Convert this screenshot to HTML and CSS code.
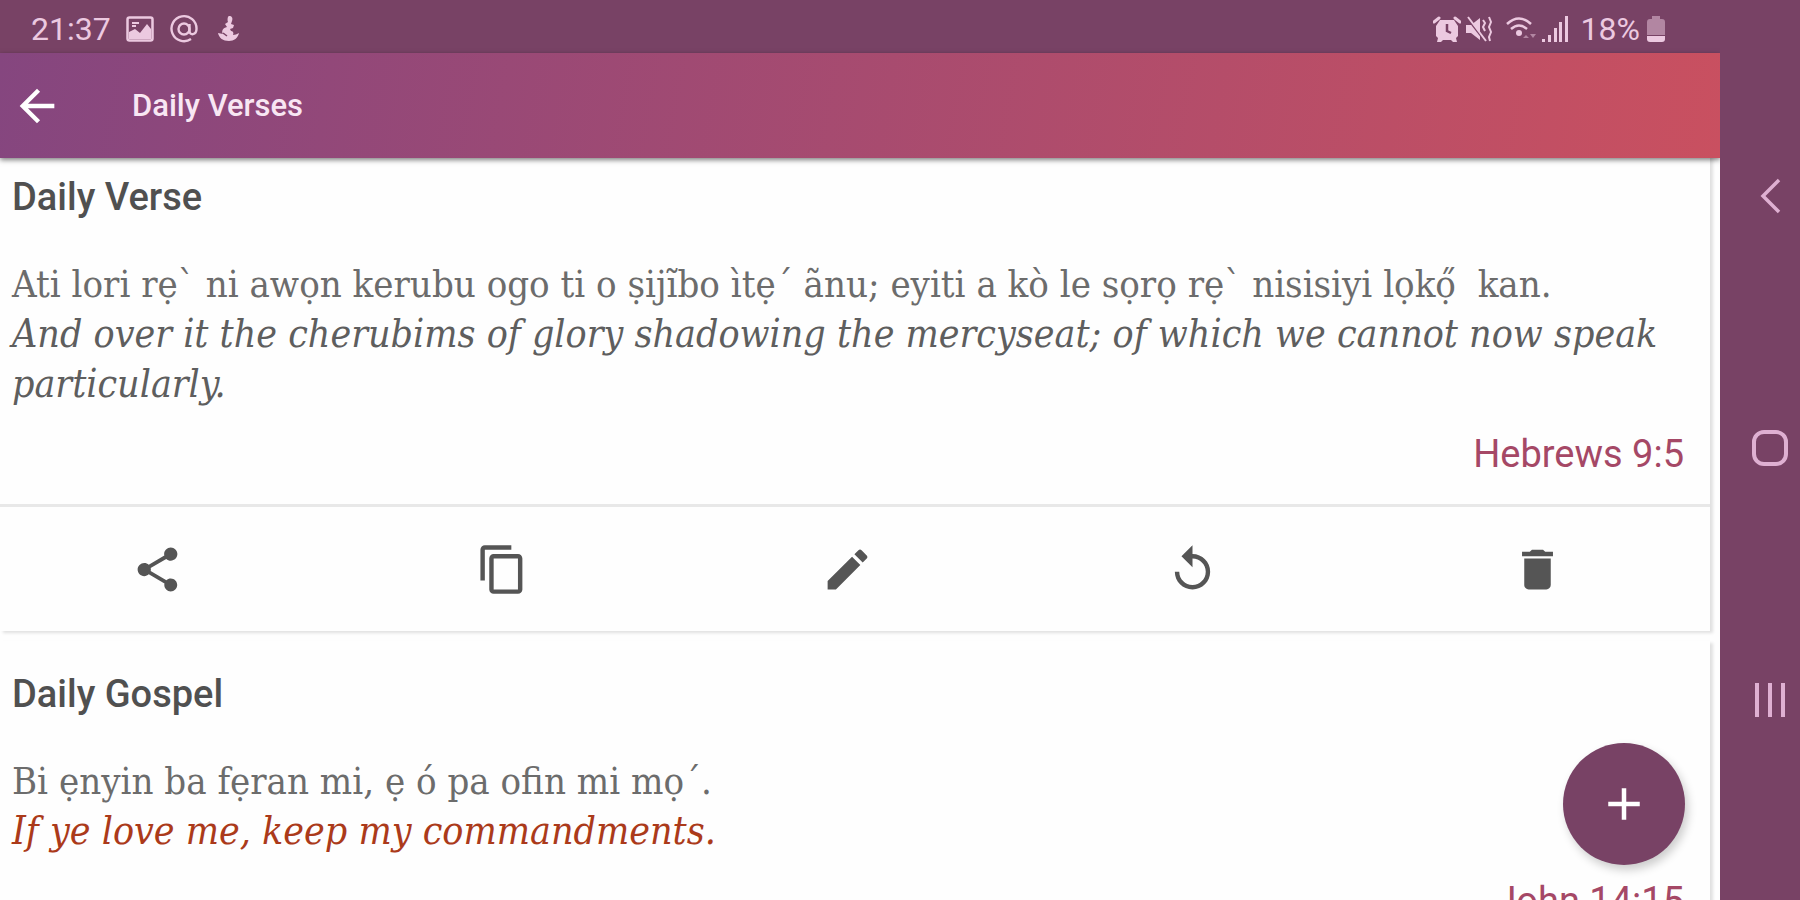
FILE: index.html
```html
<!DOCTYPE html>
<html lang="yo">
<head>
<meta charset="utf-8">
<meta name="viewport" content="width=device-width, initial-scale=1">
<title>Daily Verses</title>
<link rel="stylesheet" href="styles.css">
</head>
<body>
<div class="device">
  <div class="screen">
    <div class="status">
      <div class="status-group">
        <span class="status-text">21:37</span>
        <svg class="status-icon" viewBox="0 0 28 28"><rect x="1.500" y="2.500" width="25" height="23" rx="2" fill="none" stroke="currentColor" stroke-width="2.500"/><path d="M3 24v-7l6-3 5 4 7-9 4 5v10z" fill="currentColor"/><path d="M6 7h7v2H6zM6 10h4v2H6z" fill="currentColor"/></svg>
        <svg class="status-icon at" viewBox="0 0 30 30"><g fill="none" stroke="currentColor" stroke-width="2.400"><circle cx="15" cy="15" r="5.500"/><path d="M20.500 10v7c0 5 7 4 7-2A12.500 12.500 0 1 0 22 25"/></g></svg>
        <svg class="status-icon" viewBox="0 0 28 28"><path d="M15 1c3 0 4 2 3 5l-1 3 3 1-1 3-3 1 1 2c2 0 3 2 2 4 2 0 4-1 6-2-1 5-5 8-10 8-6 0-10-3-11-8l5 1c-2-3 0-6 4-7l-2-3 3-2c-1-3 0-6 1-6z" fill="currentColor"/><path d="M9 18l4 3" stroke="#784265" stroke-width="1.500"/></svg>
      </div>
      <div class="status-group tight">
        <svg class="status-icon" viewBox="0 0 28 28"><path d="M6 3L1 7M22 3l5 4" stroke="currentColor" stroke-width="3" stroke-linecap="round"/><path d="M7 5h14l4 6v10l-2 2 1 4h-4l-2-2h-8l-2 2H4l1-4-2-2V11z" fill="currentColor"/><path d="M14 9v7l4 2" fill="none" stroke="#784265" stroke-width="2.500"/></svg>
        <svg class="status-icon" viewBox="0 0 28 28"><path d="M1 10h5l9-7v22l-9-7H1z" fill="currentColor"/><path d="M2 3l17 22" stroke="#784265" stroke-width="2"/><path d="M3 2l18 24M18 5l2 3-2 4 2 4M24 2l2 5-2 5 2 5-2 5 1 4" fill="none" stroke="currentColor" stroke-width="2"/></svg>
        <svg class="status-icon wifi" viewBox="0 0 32 28"><g fill="none" stroke="currentColor" stroke-width="2.500"><path d="M2 9Q14-2 26 9M6 14q8-7 16 0"/></g><circle cx="14" cy="18" r="3" fill="currentColor"/><path d="M18 23l3-3 3 3zM25 19h6l-3 4z" fill="currentColor" opacity=".5"/></svg>
        <svg class="status-icon" viewBox="0 0 28 28"><path d="M1 24h3v3H1zM7 20h3v7H7zM13 13h3v14h-3zM18 7h3v20h-3zM24 1h3v26h-3z" fill="currentColor"/></svg>
        <span class="status-text battery-text">18%</span>
        <svg class="status-icon battery" viewBox="0 0 20 28"><path d="M6 1h8v3h2q3 0 3 3v13H1V7q0-3 3-3h2z" fill="currentColor" opacity=".5"/><path d="M1 21h18v3q0 3-3 3H4q-3 0-3-3z" fill="currentColor"/></svg>
      </div>
    </div>

    <header class="appbar">
      <button class="icon-button back" aria-label="Back"><svg viewBox="0 0 24 24"><path d="M20 11H7.830l5.590-5.590L12 4l-8 8 8 8 1.410-1.410L7.830 13H20z" fill="currentColor"/></svg></button>
      <h1 class="appbar-title">Daily Verses</h1>
    </header>

    <main class="cards">
      <article class="card">
        <div class="card-body">
          <h2 class="card-title">Daily Verse</h2>
          <p class="verse">Ati lori rẹˋ ni awọn kerubu ogo ti o ṣijĩbo ìtẹˊ ãnu; eyiti a kò le sọrọ rẹˋ nisisiyi lọkọ̋&nbsp; kan.</p>
          <p class="verse translation" lang="en">And over it the cherubims of glory shadowing the mercyseat; of which we cannot now speak particularly.</p>
          <p class="reference">Hebrews 9:5</p>
        </div>
        <div class="actions">
          <button class="icon-button action" aria-label="Share"><svg viewBox="0 0 24 24"><path d="M18 16.080c-.76 0-1.440.3-1.960.77L8.910 12.700c.05-.23.09-.46.09-.7s-.04-.47-.09-.7l7.050-4.110c.54.5 1.250.81 2.040.81 1.660 0 3-1.340 3-3s-1.340-3-3-3-3 1.340-3 3c0 .24.04.47.09.7L8.040 9.810C7.500 9.310 6.790 9 6 9c-1.660 0-3 1.340-3 3s1.340 3 3 3c.79 0 1.500-.31 2.040-.81l7.120 4.160c-.05.21-.08.43-.08.65 0 1.610 1.310 2.920 2.920 2.920s2.920-1.310 2.920-2.920-1.310-2.920-2.920-2.920z" fill="currentColor"/></svg></button>
          <button class="icon-button action" aria-label="Copy"><svg viewBox="0 0 24 24"><path d="M16 1H4c-1.100 0-2 .9-2 2v14h2V3h12V1zm3 4H8c-1.100 0-2 .9-2 2v14c0 1.100.9 2 2 2h11c1.100 0 2-.9 2-2V7c0-1.100-.9-2-2-2zm0 16H8V7h11v14z" fill="currentColor"/></svg></button>
          <button class="icon-button action" aria-label="Edit"><svg viewBox="0 0 24 24"><path d="M3 17.250V21h3.750L17.810 9.940l-3.750-3.750L3 17.250zM20.710 7.040c.39-.39.39-1.020 0-1.410l-2.340-2.340c-.39-.39-1.020-.39-1.410 0l-1.830 1.830 3.750 3.750 1.830-1.830z" fill="currentColor"/></svg></button>
          <button class="icon-button action" aria-label="Replay"><svg viewBox="0 0 24 24"><path d="M12 5V1L7 6l5 5V7c3.310 0 6 2.690 6 6s-2.690 6-6 6-6-2.690-6-6H4c0 4.420 3.580 8 8 8s8-3.580 8-8-3.580-8-8-8z" fill="currentColor"/></svg></button>
          <button class="icon-button action" aria-label="Delete"><svg viewBox="0 0 24 24"><path d="M6 19c0 1.100.9 2 2 2h8c1.100 0 2-.9 2-2V7H6v12zM19 4h-3.500l-1-1h-5l-1 1H5v2h14V4z" fill="currentColor"/></svg></button>
        </div>
      </article>

      <article class="card">
        <div class="card-body">
          <h2 class="card-title">Daily Gospel</h2>
          <p class="verse">Bi ẹnyin ba fẹran mi, ẹ ó pa ofin mi mọˊ.</p>
          <p class="verse translation gospel" lang="en">If ye love me, keep my commandments.</p>
          <p class="reference">John 14:15</p>
        </div>
      </article>
    </main>

    <button class="fab" aria-label="Add"><svg viewBox="0 0 24 24"><path d="M19 13h-6v6h-2v-6H5v-2h6V5h2v6h6z" fill="currentColor"/></svg></button>
  </div>

  <nav class="system-nav" aria-label="System">
    <button class="icon-button nav-button" aria-label="Back"><svg viewBox="0 0 40 40"><path d="M29 4L13 20l16 16" fill="none" stroke="currentColor" stroke-width="3.500"/></svg></button>
    <button class="icon-button nav-button" aria-label="Home"><svg viewBox="0 0 40 40"><rect x="4" y="4" width="32" height="32" rx="10" fill="none" stroke="currentColor" stroke-width="4"/></svg></button>
    <button class="icon-button nav-button" aria-label="Recent apps"><svg viewBox="0 0 40 40"><path d="M7 3v34M20 3v34M33 3v34" stroke="currentColor" stroke-width="4"/></svg></button>
  </nav>
</div>
</body>
</html>
```

FILE: styles.css
```css
* { box-sizing: border-box; }

body {
  margin: 0;
  font-family: Roboto, "Liberation Sans", sans-serif;
  color: #505050;
  background: #784265;
}

h1, h2, p { margin: 0; font-weight: 400; }

svg { display: block; width: 100%; height: 100%; }

.device {
  display: flex;
  height: 100vh;
  overflow: hidden;
}

.screen {
  position: relative;
  flex: 1;
  min-width: 0;
  display: flex;
  flex-direction: column;
  background: #fefefe;
  overflow: hidden;
}

.status {
  flex: none;
  display: flex;
  justify-content: space-between;
  align-items: center;
  padding: 4px 54px 0 31px;
  height: 53px;
  background: #784265;
  color: #ecc9e0;
}

.status-group { display: flex; align-items: center; gap: 15px; }
.status-group.tight { gap: 4px; }
.status-text { font-size: 32px; line-height: 40px; }
.battery-text { margin: 0 2px 0 8px; font-size: 32px; }
.status-icon { flex: none; width: 28px; height: 28px; }
.status-icon.at { width: 30px; height: 30px; }
.status-icon.wifi { width: 32px; margin-left: 8px; }
.status-icon.battery { width: 20px; }

.appbar {
  flex: none;
  z-index: 1;
  display: flex;
  align-items: center;
  gap: 86px;
  height: 105px;
  padding-left: 10px;
  color: #fff;
  background: linear-gradient(100deg, #85467f, #c95060);
  box-shadow: 0 2px 5px rgba(0, 0, 0, .5);
}

.appbar-title { font-size: 31px; line-height: 40px; font-weight: 500; color: #f8e6f3; }

.icon-button {
  display: flex;
  align-items: center;
  justify-content: center;
  border: 0;
  padding: 0;
  background: none;
  color: inherit;
}

.back { width: 36px; height: 52px; }
.back svg { flex: none; width: 52px; height: 52px; margin-left: 18px; }

.cards {
  display: flex;
  flex-direction: column;
  gap: 10px;
  margin-top: -14px;
  padding-right: 10px;
}

.card {
  background: #fefefe;
  box-shadow: 3px 2px 3px rgba(0, 0, 0, .12);
}

.card-body { padding: 30px 26px 27px 12px; }
.card-title { margin-bottom: 39px; font-size: 38px; line-height: 46px; font-weight: 500; }

.verse {
  font-family: "Roboto Slab", "DejaVu Serif Condensed", "DejaVu Serif", serif;
  font-size: 38px;
  line-height: 50px;
  color: #6c6c6c;
}

.translation { font-size: 39px; font-style: italic; color: #5e5e5e; }
.gospel { color: #ab3a1a; }

.reference {
  margin-top: 22px;
  font-size: 38px;
  line-height: 46px;
  text-align: right;
  color: #a54866;
}

.actions {
  display: flex;
  margin-left: -15px;
  border-top: 3px solid #e8e8e8;
  padding: 35px 0;
}

.action { flex: 1; height: 54px; color: #555; }
.action svg { width: 53px; height: 53px; }

.fab {
  position: absolute;
  right: 35px;
  bottom: 35px;
  display: flex;
  align-items: center;
  justify-content: center;
  width: 122px;
  height: 122px;
  border: 0;
  border-radius: 50%;
  color: #fff;
  background: #784265;
  box-shadow: 3px 5px 10px rgba(0, 0, 0, .2);
}

.fab svg { width: 54px; height: 54px; }

.system-nav {
  flex: none;
  display: flex;
  flex-direction: column;
  justify-content: center;
  width: 80px;
  padding: 0 0 4px 20px;
  color: #dfb0d2;
}

.nav-button { height: 252px; }
.nav-button svg { width: 40px; height: 40px; }
```
